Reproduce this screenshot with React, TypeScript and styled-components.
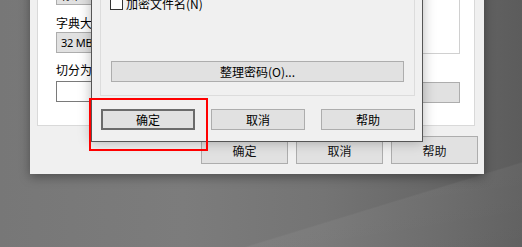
import React from "react";
import styled, { createGlobalStyle } from "styled-components";

const GlobalStyle = createGlobalStyle`
  html, body {
    margin: 0;
    padding: 0;
    width: 100%;
    height: 100%;
    overflow: hidden;
  }
  body {
    font-family: "Segoe UI", "Noto Sans CJK SC", "Noto Sans", sans-serif;
    font-size: 12px;
    color: #000;
  }
`;

const Desktop = styled.div`
  position: relative;
  width: 522px;
  height: 247px;
  overflow: hidden;
  background:
    linear-gradient(163deg, rgba(255, 255, 255, 0) 79%, rgba(255, 255, 255, 0.05) 79.4%, rgba(255, 255, 255, 0.03) 100%),
    linear-gradient(90deg, #777777 0%, #7c7c7c 35%, #747474 62%, #676767 84%, #5c5c5c 100%);
`;

const BackWindow = styled.div`
  position: absolute;
  left: 30px;
  top: -60px;
  width: 454px;
  height: 234px;
  box-sizing: border-box;
  display: flex;
  flex-direction: column;
  padding: 0 6px 10px 7px;
  background: #f0f0f0;
  box-shadow: 0 3px 10px rgba(0, 0, 0, 0.35);
`;

const Panel = styled.div`
  width: 438px;
  height: 186px;
  box-sizing: border-box;
  display: flex;
  justify-content: space-between;
  align-items: flex-start;
  background: #ffffff;
  border: 1px solid #d9d9d9;
  padding: 0 14px 0 18px;
`;

const LeftColumn = styled.div`
  display: flex;
  flex-direction: column;
  width: 170px;
  margin-top: 43px;
`;

const RightColumn = styled.div`
  display: flex;
  flex-direction: column;
  width: 200px;
  margin-top: 19px;
`;

const FieldLabel = styled.div<{ $gap: number }>`
  margin-top: ${(p) => p.$gap}px;
  height: 16px;
  line-height: 16px;
  white-space: nowrap;
  font-family: "Microsoft YaHei UI", "Noto Sans CJK SC", sans-serif;
`;

const ComboBox = styled.div<{ $gap?: number }>`
  margin-top: ${(p) => p.$gap ?? 0}px;
  height: 21px;
  box-sizing: border-box;
  display: flex;
  align-items: center;
  padding-left: 4px;
  background: #e1e1e1;
  border: 1px solid #adadad;
  font-family: "Segoe UI", "Noto Sans", "Noto Sans CJK SC", sans-serif;
  font-size: 11px;
  letter-spacing: -0.2px;
  white-space: nowrap;
`;

const TextBox = styled.div<{ $gap: number }>`
  margin-top: ${(p) => p.$gap}px;
  height: 21px;
  box-sizing: border-box;
  background: #ffffff;
  border: 1px solid #7a7a7a;
`;

const ListBox = styled.div`
  height: 94px;
  box-sizing: border-box;
  background: #ffffff;
  border: 1px solid #d0d0d0;
`;

const BackButtons = styled.div`
  display: flex;
  justify-content: flex-end;
  gap: 8px;
  margin-top: 10px;
`;

const BackButton = styled.button`
  width: 87px;
  height: 28px;
  box-sizing: border-box;
  padding: 0;
  background: #e1e1e1;
  border: 1px solid #adadad;
  font-family: "Microsoft YaHei UI", "Noto Sans CJK SC", sans-serif;
  font-size: 12px;
  color: #111;
`;

const FrontDialog = styled.div`
  position: absolute;
  left: 91px;
  top: -40px;
  width: 332px;
  height: 182px;
  box-sizing: border-box;
  display: flex;
  flex-direction: column;
  padding: 0 7px 10px 8px;
  background: #f0f0f0;
  border: 1px solid #555555;
  box-shadow: 0 0 12px rgba(0, 0, 0, 0.28);
`;

const GroupBox = styled.div`
  margin-top: 9px;
  display: flex;
  flex-direction: column;
  padding: 26px 10px 13px 9px;
  border: 1px solid #dcdcdc;
`;

const CheckRow = styled.label`
  display: flex;
  align-items: center;
  gap: 3px;
  height: 13px;
  font-family: "Microsoft YaHei UI", "Noto Sans CJK SC", sans-serif;
  line-height: 13px;
  white-space: nowrap;
`;

const CheckBox = styled.span`
  width: 13px;
  height: 13px;
  box-sizing: border-box;
  background: #ffffff;
  border: 1px solid #333333;
`;

const WideButton = styled.button`
  margin: 51px 0 0 1px;
  width: 293px;
  height: 21px;
  box-sizing: border-box;
  padding: 0;
  background: #e1e1e1;
  border: 1px solid #adadad;
  font-family: "Microsoft YaHei UI", "Noto Sans CJK SC", sans-serif;
  font-size: 12px;
  color: #000;
`;

const FrontButtons = styled.div`
  display: flex;
  justify-content: flex-end;
  gap: 16px;
  margin-top: 13px;
`;

const FrontButton = styled.button<{ $default?: boolean }>`
  width: 94px;
  height: 21px;
  box-sizing: border-box;
  padding: 0;
  background: #e1e1e1;
  border: ${(p) => (p.$default ? "2px solid #6b6b6b" : "1px solid #adadad")};
  font-family: "Microsoft YaHei UI", "Noto Sans CJK SC", sans-serif;
  font-size: 12px;
  color: #000;
`;

const Highlight = styled.div`
  position: absolute;
  left: 89px;
  top: 98px;
  width: 119px;
  height: 53px;
  box-sizing: border-box;
  border: 2px solid #ff0000;
  pointer-events: none;
`;

export default function App() {
  return (
    <>
      <GlobalStyle />
      <Desktop>
        <BackWindow>
          <Panel>
            <LeftColumn>
              <ComboBox>标准</ComboBox>
              <FieldLabel $gap={10}>字典大小(D):</FieldLabel>
              <ComboBox $gap={1}>32 MB</ComboBox>
              <FieldLabel $gap={9}>切分为分卷(V), 字节:</FieldLabel>
              <TextBox $gap={3} />
            </LeftColumn>
            <RightColumn>
              <ListBox />
              <ComboBox $gap={28} />
            </RightColumn>
          </Panel>
          <BackButtons>
            <BackButton>确定</BackButton>
            <BackButton>取消</BackButton>
            <BackButton>帮助</BackButton>
          </BackButtons>
        </BackWindow>

        <FrontDialog>
          <GroupBox>
            <CheckRow>
              <CheckBox />
              加密文件名(N)
            </CheckRow>
            <WideButton>整理密码(O)...</WideButton>
          </GroupBox>
          <FrontButtons>
            <FrontButton $default>确定</FrontButton>
            <FrontButton>取消</FrontButton>
            <FrontButton>帮助</FrontButton>
          </FrontButtons>
        </FrontDialog>

        <Highlight />
      </Desktop>
    </>
  );
}
